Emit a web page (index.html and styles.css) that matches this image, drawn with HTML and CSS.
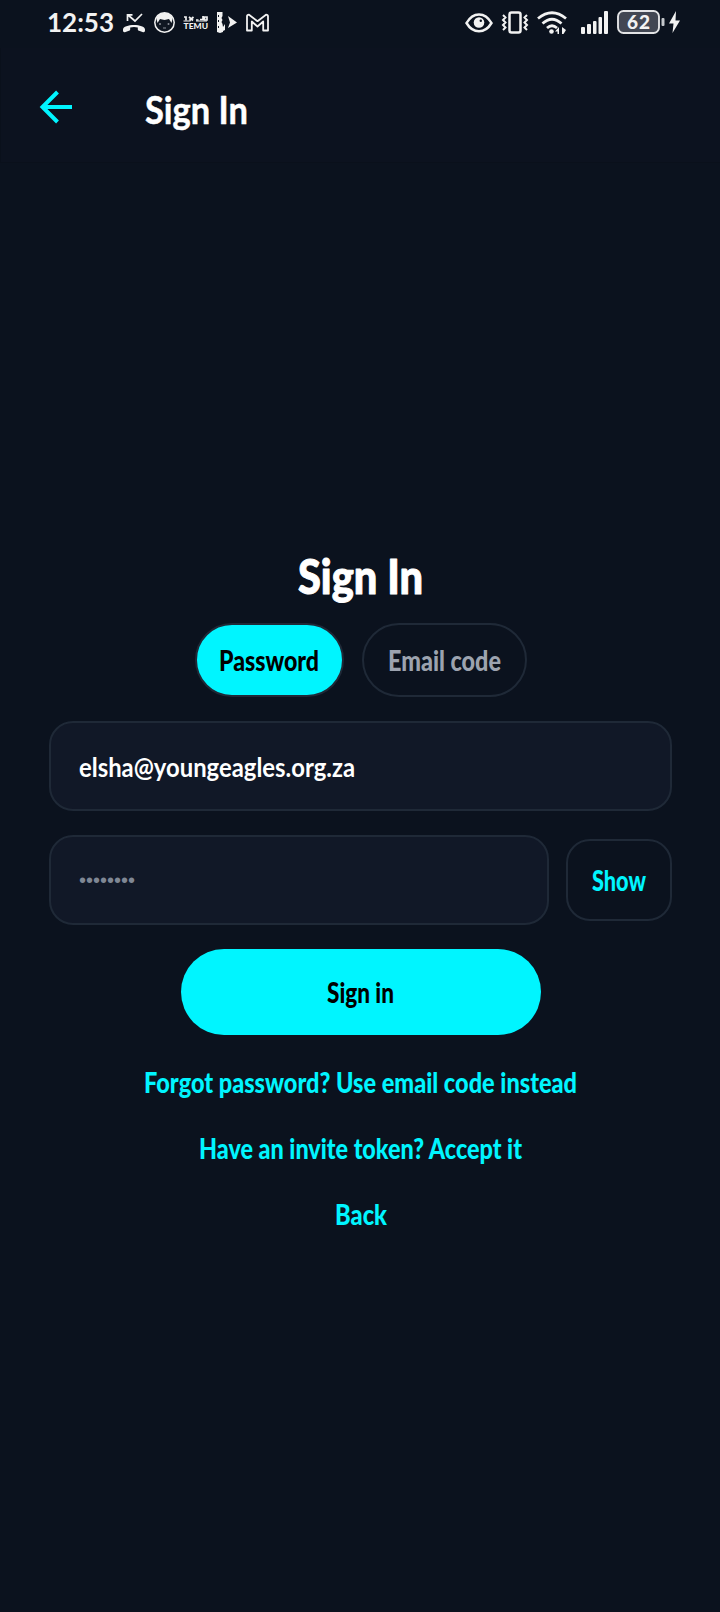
FILE: index.html
```html
<!DOCTYPE html>
<html lang="en">
<head>
<meta charset="utf-8">
<title>Sign In</title>
<link rel="stylesheet" href="styles.css">
</head>
<body>
<div class="status">
  <svg class="clock" width="68" height="48"><text x="1" y="31.5" textLength="67">12:53</text></svg>
  <svg class="left-icons" viewBox="120 0 152 48" width="152" height="48">
    <g fill="none" stroke="#f2f2f2" stroke-width="1.7"><path d="M127.5 21V14.8h5M128 15l7 6 7-7"/></g>
    <path fill="#f2f2f2" d="M123 29.5c0-6 22-6 22 0v1c0 1.500-1 2-2.500 1.500l-3.500-1.200c-1-.3-1.200-.8-1.200-1.800v-1.500q-3.800-1-7.600 0V29c0 1-.2 1.500-1.200 1.800L125.500 32c-1.500.5-2.500 0-2.500-1.500z"/>
    <circle cx="164.500" cy="22.500" r="9.700" fill="#101722" stroke="#f2f2f2" stroke-width="1.500"/>
    <path fill="#f2f2f2" d="M156.500 19c1-8 15-8 16 0l-1 4-2.500-4-4.500 1-4.500-1-2.500 4z"/>
    <g fill="#8b9099"><circle cx="160" cy="24" r="1"/><circle cx="168.500" cy="24" r="1"/><path d="M163 27.500h3v1h-3z"/></g>
    <g fill="none" stroke="#f2f2f2" stroke-width="1.700"><path d="M184 17h2v3.500M189 17l4 3.500M193.500 17l-4 3.500M196 20h2.500M203 16v3.500h-3M204.500 20V17h2.500v3z"/><path stroke-width="1" d="M183.500 21h7M196 21h11"/></g>
    <text class="temu" x="183.500" y="29" textLength="24.500" lengthAdjust="spacingAndGlyphs">TEMU</text>
    <path fill="#f2f2f2" d="M217 12h5.500v4l-1 2 1 2-1 2 1 2 .5 3v5l-3 1-3-1z"/><path fill="#f2f2f2" d="M223 27l2-3v6l-2 1zM228 16l9 6.500-9 5.500 2-5.500z"/>
    <path fill="#101722" d="M218 15h1v2h-1zm0 5h1v2h-1zm0 6h1v2h-1z"/>
    <path fill="none" stroke="#f2f2f2" stroke-width="1.800" stroke-linejoin="round" d="M247 30.500V16.500q0-1.800 2-1.800l8.500 6.500 8.500-6.500q2 0 2 1.800v14h-4.800V21.500l-5.700 5-5.700-5v9z"/>
  </svg>
  <svg class="right-icons" viewBox="464 0 222 48" width="222" height="48">
    <g fill="none" stroke="#f2f2f2" stroke-width="2.500">
      <path d="M467.500 23C474 11.500 486 11.500 492.500 23 486 34 474 34 467.500 23z"/>
      <rect x="510.500" y="12.500" width="11" height="20" rx="2"/>
      <path stroke-width="2" d="M504 15l2.500 2.500-2.500 2.500 2.500 2.500-2.500 2.500 2.500 2.500-2.500 2.500M528 15l-2.500 2.500 2.500 2.500-2.500 2.500 2.500 2.500-2.500 2.500 2.500 2.500"/>
      <path stroke-width="2.800" d="M539 18.500q14-11.500 28 0M543.500 23.500q9.500-8.500 19 0M548 28q5-4.500 10 0"/>
    </g>
    <circle cx="480" cy="22.500" r="5.300" fill="#f2f2f2"/><circle cx="481.800" cy="20.800" r="1.200" fill="#0a121e"/>
    <circle cx="552.500" cy="31.500" r="2.300" fill="#f2f2f2"/>
    <path fill="#f2f2f2" d="M560 27v7h-1.500v-2.500H556zM563 27v7h1.500l2.500-4z"/>
    <g fill="#f2f2f2"><rect x="582" y="27" width="4" height="7" rx="1"/><rect x="588" y="24" width="4" height="10" rx="1"/><rect x="594" y="21" width="3.500" height="13" rx="1"/><rect x="599.500" y="17" width="3.500" height="17" rx="1"/><rect x="605" y="11" width="4" height="23" rx="1"/></g>
    <rect x="619" y="11" width="41" height="22" rx="5.500" fill="#424753" stroke="#e2e3e5" stroke-width="1.900"/>
    <rect x="662.500" y="18" width="3" height="8" rx="1" fill="#c4c7cb"/>
    <text class="level" x="628" y="28.500" textLength="23">62</text>
    <path fill="#f2f2f2" d="M677 11l-7 12.500h4.500L673.500 33l7.500-12.500h-4.500z"/>
  </svg>
</div>
<header class="appbar">
  <svg class="back" width="34" height="34" viewBox="0 0 34 34"><path fill="none" stroke="#00f5ff" stroke-width="4" d="M33 17H4M18.500 2L3.500 17l15 15"/></svg>
  <svg class="title" width="104" height="60"><text x="0" y="40" textLength="103" lengthAdjust="spacingAndGlyphs">Sign In</text></svg>
</header>
<main>
  <svg class="heading" width="125" height="60"><text x="0" y="43.500" textLength="125" lengthAdjust="spacingAndGlyphs">Sign In</text></svg>
  <div class="tabs">
    <div class="tab active"><svg class="label" width="100" height="36"><text x="0" y="29" textLength="100" lengthAdjust="spacingAndGlyphs">Password</text></svg></div>
    <div class="tab"><svg class="label" width="113" height="36"><text x="0" y="29" textLength="113" lengthAdjust="spacingAndGlyphs">Email code</text></svg></div>
  </div>
  <div class="field email"><svg class="label" width="276" height="36"><text x="0" y="28.500" textLength="276" lengthAdjust="spacingAndGlyphs">elsha@youngeagles.org.za</text></svg></div>
  <div class="row">
    <div class="field password"><span>••••••••</span></div>
    <div class="show"><svg class="label" width="54" height="36"><text x="0" y="29" textLength="54" lengthAdjust="spacingAndGlyphs">Show</text></svg></div>
  </div>
  <div class="submit"><svg class="label" width="67" height="36"><text x="0" y="29" textLength="67" lengthAdjust="spacingAndGlyphs">Sign in</text></svg></div>
  <div class="links">
    <svg class="label" width="433" height="36"><text x="0" y="29" textLength="433" lengthAdjust="spacingAndGlyphs">Forgot password? Use email code instead</text></svg>
    <svg class="label" width="323" height="36"><text x="0" y="29" textLength="323" lengthAdjust="spacingAndGlyphs">Have an invite token? Accept it</text></svg>
    <svg class="label" width="52" height="36"><text x="0" y="29" textLength="52" lengthAdjust="spacingAndGlyphs">Back</text></svg>
  </div>
</main>
</body>
</html>
```
FILE: styles.css
```css
* { box-sizing: border-box; }
body { margin: 0; height: 1612px; background: #0b121e; font-family: Lato, "Open Sans", sans-serif; overflow: hidden; }
svg { display: block; overflow: visible; flex: none; }
.status { display: flex; height: 48px; padding-left: 46px; }
.clock text { font-size: 26px; font-weight: 700; fill: #f2f2f2; }
.left-icons { margin-left: 6px; }
.right-icons { margin-left: 191px; }
.temu { font-size: 8px; font-weight: 900; fill: #f2f2f2; }
.level { font-size: 19px; font-weight: 900; fill: #f2f2f2; }
.appbar { display: flex; height: 115px; padding-left: 38px; background: #0c121f; border-left: 1px solid #0a101b; border-bottom: 1px solid #0a101b; }
.back { margin-top: 42px; }
.title { margin: 36px 0 0 72px; }
.title text { font-size: 38px; font-weight: 700; fill: #fff; stroke: #fff; stroke-width: .5px; stroke-linejoin: round; }
main { display: flex; flex-direction: column; align-items: center; padding: 387px 48px 0 49px; }
.heading text { font-size: 47px; font-weight: 900; fill: #fff; stroke: #fff; stroke-width: 1px; stroke-linejoin: round; }
.tabs { display: flex; gap: 18px; margin-top: 13px; }
.tab { display: flex; justify-content: center; align-items: center; width: 165px; height: 74px; border: 2px solid #1f2937; border-radius: 37px; fill: #9ca3af; }
.tab.active { width: 149px; background: #00f5ff; fill: #000; }
.label text { font-size: 28px; font-weight: 900; }
.field { display: flex; align-items: center; height: 90px; padding-left: 28px; background: #111827; border: 2px solid #1f2937; border-radius: 24px; }
.email { width: 623px; margin-top: 24px; fill: #fff; }
.email .label text { font-size: 26px; font-weight: 700; }
.row { display: flex; align-items: center; width: 623px; margin-top: 24px; }
.password { width: 500px; color: #7f8794; font: 20px "Liberation Sans", sans-serif; }
.show { display: flex; align-items: center; justify-content: center; width: 106px; height: 82px; margin-left: 17px; border: 2px solid #1f2937; border-radius: 24px; fill: #00f5ff; }
.submit { display: flex; align-items: center; justify-content: center; width: 360px; height: 86px; margin-top: 24px; border-radius: 43px; background: #00f5ff; fill: #000; }
.links { display: flex; flex-direction: column; align-items: center; gap: 30px; margin-top: 29px; fill: #00f5ff; }
```
